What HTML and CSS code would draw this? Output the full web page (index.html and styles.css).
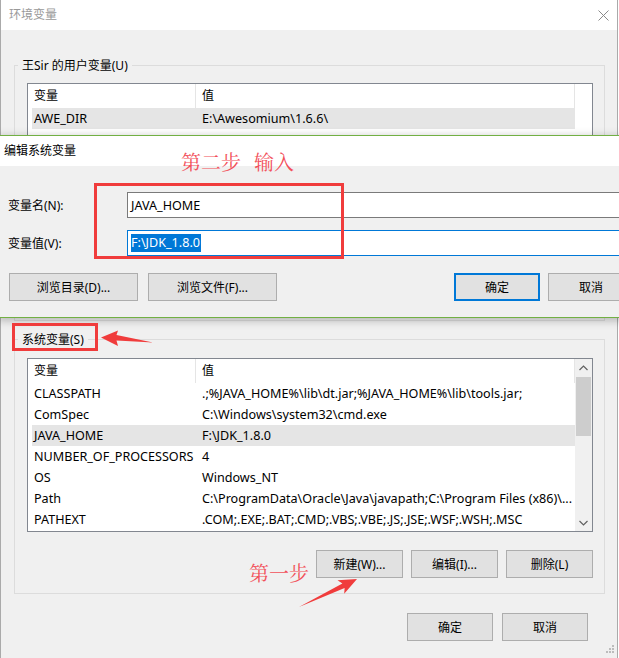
FILE: index.html
```html
<!DOCTYPE html>
<html lang="zh-CN">
<head>
<meta charset="utf-8">
<title>环境变量</title>
<link rel="stylesheet" href="styles.css">
</head>
<body>
<div class="screen">
  <div class="env-window">
    <div class="titlebar">
      <span class="title">环境变量</span>
      <svg class="close-icon" viewBox="0 0 11 11"><path d="M0.5 0.5L10.5 10.5M10.5 0.5L0.5 10.5" stroke="#8a8a8a" stroke-width="1" fill="none"/></svg>
    </div>
    <div class="env-body">
      <fieldset class="group group-user">
        <legend>王Sir 的用户变量(U)</legend>
        <div class="listbox listbox-user">
          <div class="list-main">
            <div class="list-head"><div class="hc1">变量</div><div class="hc2">值</div></div>
            <div class="row row-sel"><div class="c1">AWE_DIR</div><div class="c2">E:\Awesomium\1.6.6\</div></div>
          </div>
          <div class="scroll-blank"></div>
        </div>
      </fieldset>
      <fieldset class="group group-sys">
        <legend>系统变量(S)</legend>
        <div class="listbox listbox-sys">
          <div class="list-main">
            <div class="list-head"><div class="hc1">变量</div><div class="hc2">值</div></div>
            <div class="row"><div class="c1">CLASSPATH</div><div class="c2">.;%JAVA_HOME%\lib\dt.jar;%JAVA_HOME%\lib\tools.jar;</div></div>
            <div class="row"><div class="c1">ComSpec</div><div class="c2">C:\Windows\system32\cmd.exe</div></div>
            <div class="row row-sel"><div class="c1">JAVA_HOME</div><div class="c2">F:\JDK_1.8.0</div></div>
            <div class="row"><div class="c1">NUMBER_OF_PROCESSORS</div><div class="c2">4</div></div>
            <div class="row"><div class="c1">OS</div><div class="c2">Windows_NT</div></div>
            <div class="row"><div class="c1">Path</div><div class="c2">C:\ProgramData\Oracle\Java\javapath;C:\Program Files (x86)\...</div></div>
            <div class="row"><div class="c1">PATHEXT</div><div class="c2">.COM;.EXE;.BAT;.CMD;.VBS;.VBE;.JS;.JSE;.WSF;.WSH;.MSC</div></div>
          </div>
          <div class="scrollbar">
            <div class="sb-btn"><svg width="9" height="6" viewBox="0 0 9 6"><path d="M0.5 5L4.5 1L8.5 5" stroke="#606060" stroke-width="1.2" fill="none"/></svg></div>
            <div class="sb-track"><div class="sb-thumb"></div></div>
            <div class="sb-btn"><svg width="9" height="6" viewBox="0 0 9 6"><path d="M0.5 1L4.5 5L8.5 1" stroke="#606060" stroke-width="1.2" fill="none"/></svg></div>
          </div>
        </div>
        <div class="btn-row">
          <button class="btn btn-sm">新建(W)...</button>
          <button class="btn btn-sm">编辑(I)...</button>
          <button class="btn btn-sm">删除(L)</button>
        </div>
      </fieldset>
      <div class="dialog-btns">
        <button class="btn btn-dlg">确定</button>
        <button class="btn btn-dlg">取消</button>
      </div>
    </div>
    <svg class="grip" width="10" height="10" viewBox="0 0 10 10">
      <rect x="7" y="0" width="2" height="2" fill="#bcbcbc"/>
      <rect x="4" y="3" width="2" height="2" fill="#bcbcbc"/>
      <rect x="7" y="3" width="2" height="2" fill="#bcbcbc"/>
      <rect x="1" y="6" width="2" height="2" fill="#bcbcbc"/>
      <rect x="4" y="6" width="2" height="2" fill="#bcbcbc"/>
      <rect x="7" y="6" width="2" height="2" fill="#bcbcbc"/>
    </svg>
  </div>

  <div class="edit-dialog">
    <div class="edit-title">编辑系统变量</div>
    <div class="edit-body">
      <div class="form-grid">
        <div class="form-label">变量名(N):</div>
        <div class="textbox">JAVA_HOME</div>
        <div class="form-label">变量值(V):</div>
        <div class="textbox textbox-focus"><span class="selected">F:\JDK_1.8.0</span></div>
      </div>
      <div class="edit-btns">
        <div class="btn-group">
          <button class="btn btn-wide">浏览目录(D)...</button>
          <button class="btn btn-wide">浏览文件(F)...</button>
        </div>
        <div class="btn-group btn-group-right">
          <button class="btn btn-dlg btn-default">确定</button>
          <button class="btn btn-dlg">取消</button>
        </div>
      </div>
    </div>
  </div>

  <div class="anno-box anno-box-input"></div>
  <div class="anno-text anno-step2"><span>第二步</span><span>输入</span></div>
  <div class="anno-box anno-box-label"></div>
  <div class="anno-text anno-step1">第一步</div>
  <svg class="anno-arrows" width="619" height="658" viewBox="0 0 619 658">
    <polygon points="101,337.5 118,330.5 116.5,335 153,342.5 116.5,340.5 118,346" fill="#f03c3c"/>
    <polygon points="357,579 337.5,580.2 342.4,583.4 299,607 344.6,587.9 344.2,593.7" fill="#f03c3c"/>
  </svg>
</div>
</body>
</html>
```

FILE: styles.css
```css
* { box-sizing: border-box; }

body {
  margin: 0;
  background: #ffffff;
  overflow: hidden;
  font-family: "Noto Sans", "Noto Sans CJK SC", sans-serif;
  font-size: 12px;
  color: #000;
}

.screen {
  position: relative;
  width: 619px;
  height: 658px;
  overflow: hidden;
}

/* background window */
.env-window {
  position: relative;
  width: 618px;
  height: 658px;
  background: #f0f0f0;
  border-left: 1px solid #aaaaaa;
  border-right: 1px solid #aaaaaa;
  display: flex;
  flex-direction: column;
}

.titlebar {
  flex: none;
  height: 30px;
  background: #fff;
  display: flex;
  align-items: center;
  padding: 0 8px;
}

.title { color: #999; line-height: 16px; }

.close-icon { margin-left: auto; width: 11px; height: 11px; }

.env-body { display: flex; flex-direction: column; }

.group {
  margin: 27px 12px 10px 13px;
  padding: 0;
  border: 1px solid #dcdcdc;
  min-width: 0;
}

.group legend {
  margin-left: 3px;
  padding: 0 4px;
  line-height: 17px;
  font-size: 12px;
}

.group-user { height: 264px; }
.group-sys { margin-top: 0; padding-bottom: 15px; }

.listbox {
  margin: 9px 11px 0 12px;
  border: 1px solid #828790;
  background: #fff;
  display: flex;
  overflow: hidden;
}

.listbox-user { height: 200px; }
.listbox-sys { margin-top: 10px; height: 174px; }

.list-main { flex: 1; min-width: 0; }

.list-head {
  display: flex;
  height: 24px;
  line-height: 24px;
  border-right: 1px solid #e5e5e5;
}

.hc1 {
  width: 168px;
  padding-left: 6px;
  border-right: 1px solid #e5e5e5;
}

.hc2 { flex: 1; padding-left: 6px; }

.row {
  display: flex;
  height: 21px;
  line-height: 21px;
  margin-left: 4px;
  white-space: nowrap;
  font-size: 12.6px;
}

.row-sel { background: #e5e5e5; }

.c1 { width: 164px; padding-left: 2px; overflow: hidden; }
.c2 { flex: 1; padding-left: 6px; overflow: hidden; }

.scroll-blank { width: 17px; }

.scrollbar {
  width: 17px;
  background: #f0f0f0;
  display: flex;
  flex-direction: column;
}

.sb-btn {
  height: 17px;
  display: flex;
  align-items: center;
  justify-content: center;
}

.sb-track { flex: 1; padding: 1px 1px 0; }

.sb-thumb { height: 59px; background: #cdcdcd; }

.btn {
  font-family: inherit;
  font-size: 12px;
  color: #000;
  background: #e1e1e1;
  border: 1px solid #adadad;
  padding: 0;
  height: 28px;
  margin: 0;
}

.btn-row {
  display: flex;
  justify-content: flex-end;
  gap: 8px;
  margin: 18px 11px 0 0;
}

.btn-sm { width: 87px; }

.dialog-btns {
  display: flex;
  justify-content: flex-end;
  gap: 9px;
  margin-top: 9px;
  padding-right: 29px;
}

.btn-dlg { width: 86px; }

.grip {
  position: absolute;
  right: 2px;
  bottom: 3px;
}

/* edit dialog window on top */
.edit-dialog {
  position: absolute;
  top: 135px;
  left: -3px;
  width: 648px;
  height: 183px;
  border-top: 1px solid #72b043;
  border-bottom: 1px solid #72b043;
  background: #f0f0f0;
  box-shadow: 0 2px 9px rgba(0, 0, 0, 0.28);
  display: flex;
  flex-direction: column;
}

.edit-title {
  flex: none;
  height: 30px;
  line-height: 30px;
  background: #fff;
  padding-left: 7px;
}

.edit-body { flex: 1; padding: 26px 11px 0 11px; }

.form-grid {
  display: grid;
  grid-template-columns: 119px 1fr;
  grid-auto-rows: 26px;
  row-gap: 12px;
  align-items: center;
}

.textbox {
  height: 26px;
  border: 1px solid #7a7a7a;
  background: #fff;
  padding: 0 3px;
  display: flex;
  align-items: center;
  white-space: nowrap;
  font-size: 12.6px;
}

.textbox-focus { border-color: #0078d7; }

.selected {
  background: #0078d7;
  color: #fff;
  line-height: 18px;
  padding-right: 1px;
}

.edit-btns {
  display: flex;
  justify-content: space-between;
  margin-top: 17px;
}

.btn-group { display: flex; gap: 10px; margin-left: 1px; }
.btn-group-right { gap: 8px; margin-left: 0; }

.btn-wide { width: 129px; }

.btn-default { border: 2px solid #0078d7; }

/* red annotations drawn over the screenshot */
.anno-box {
  position: absolute;
  border: 3px solid #f03c3c;
}

.anno-box-input { left: 94px; top: 183px; width: 250px; height: 76px; }
.anno-box-label { left: 12px; top: 323px; width: 86px; height: 28px; }

.anno-text {
  position: absolute;
  font-family: "Noto Serif CJK SC", "Noto Sans CJK SC", serif;
  font-size: 20px;
  line-height: 24px;
  color: #f2505a;
  display: flex;
  gap: 13px;
}

.anno-step2 { left: 181px; top: 150px; }
.anno-step1 { left: 249px; top: 561px; }

.anno-arrows {
  position: absolute;
  left: 0;
  top: 0;
  pointer-events: none;
}
```
